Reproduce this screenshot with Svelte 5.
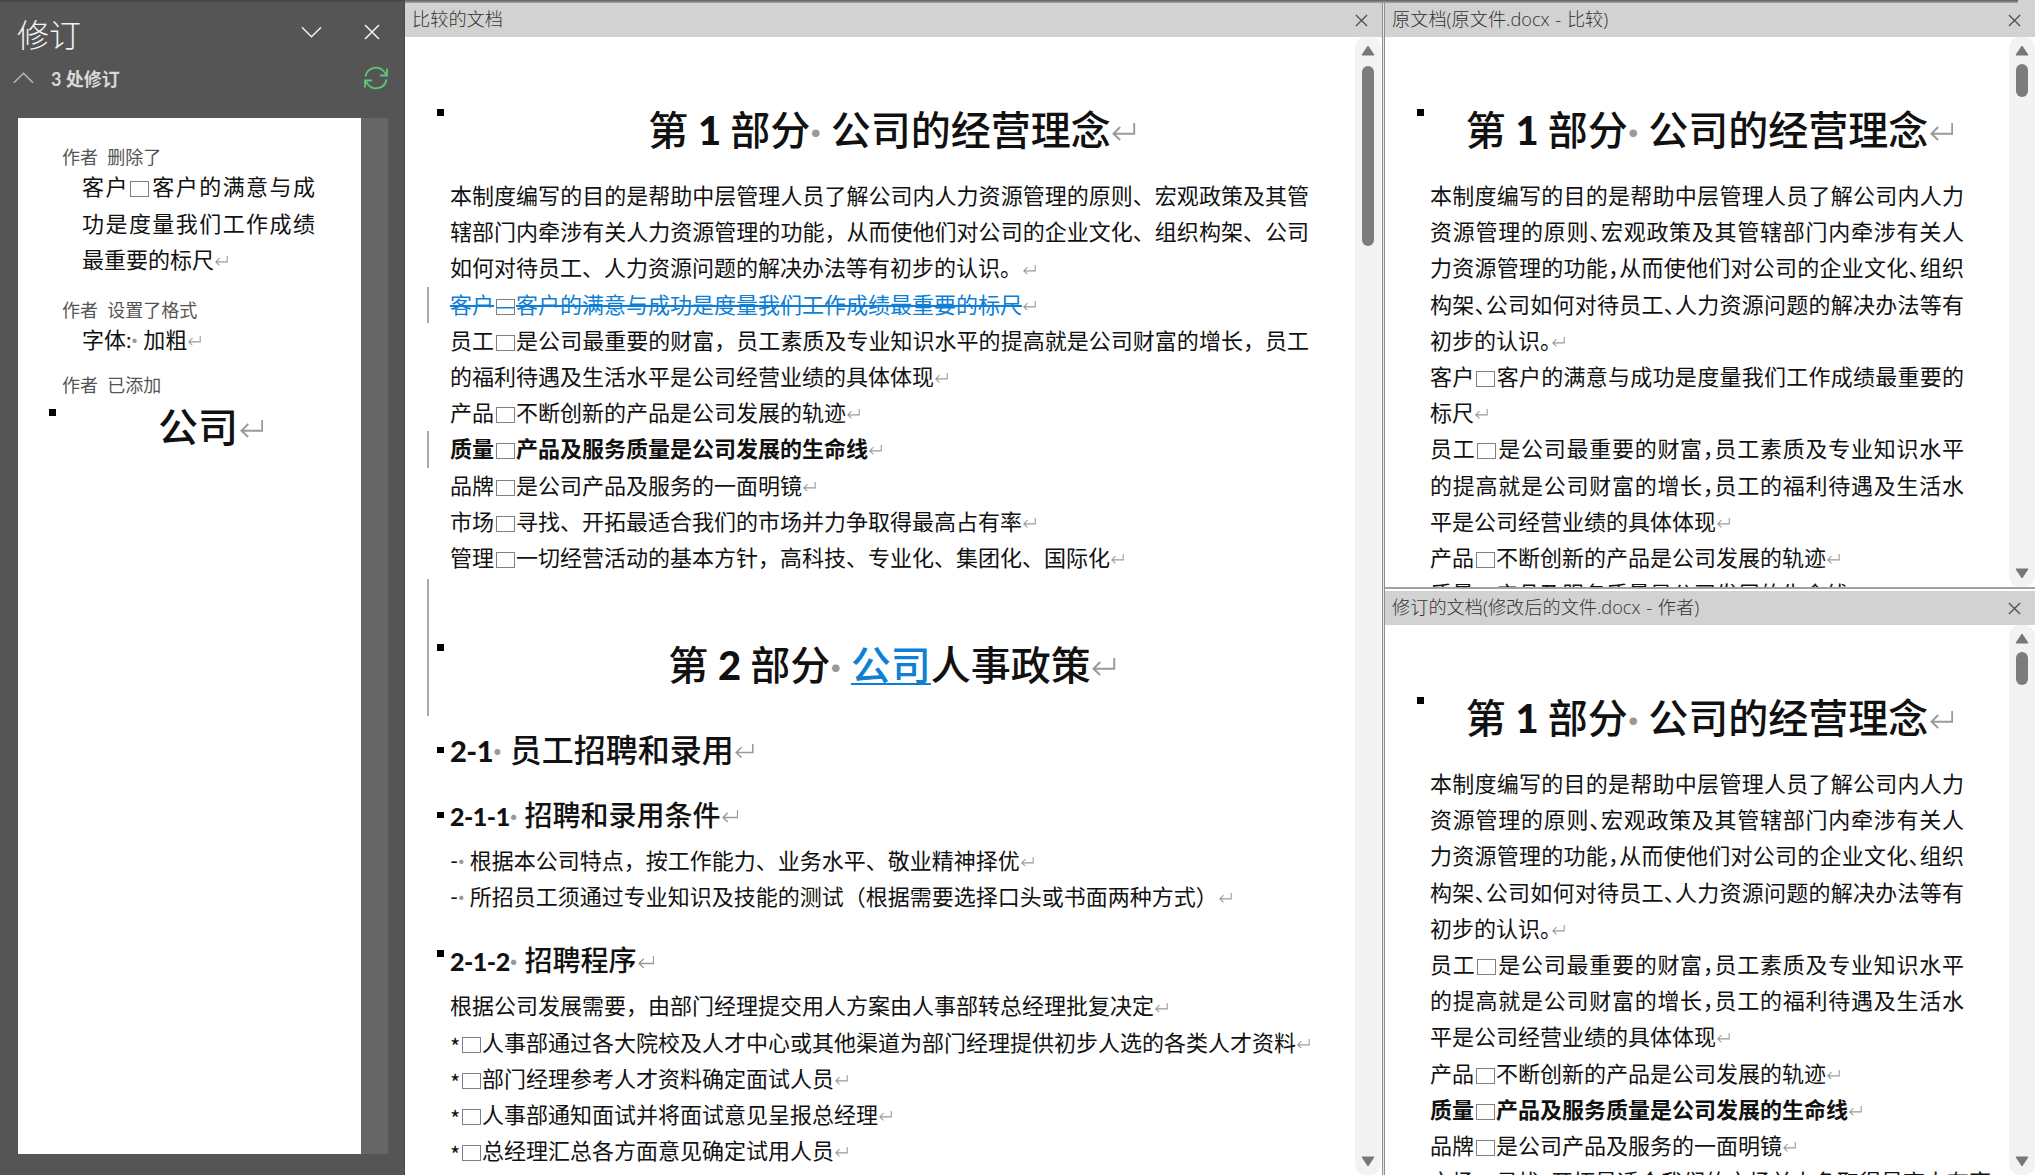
<script lang="ts">
	const comma = '\uFF0C';

	const intro = [
		'本制度编写的目的是帮助中层管理人员了解公司内人力',
		'资源管理的原则、宏观政策及其管辖部门内牵涉有关人',
		`力资源管理的功能${comma}从而使他们对公司的企业文化、组织`,
		'构架、公司如何对待员工、人力资源问题的解决办法等有',
		'初步的认识。↵'
	];
	const staff = [
		`员工□是公司最重要的财富${comma}员工素质及专业知识水平`,
		`的提高就是公司财富的增长${comma}员工的福利待遇及生活水`,
		'平是公司经营业绩的具体体现↵',
		'产品□不断创新的产品是公司发展的轨迹↵'
	];

	const original = [
		...intro,
		'客户□客户的满意与成功是度量我们工作成绩最重要的',
		'标尺↵',
		...staff,
		'质量□产品及服务质量是公司发展的生命线↵'
	];
	const revised = [
		...intro,
		...staff,
		'#质量□产品及服务质量是公司发展的生命线↵',
		'品牌□是公司产品及服务的一面明镜↵',
		'市场□寻找、开拓最适合我们的市场并力争取得最高占有率↵'
	];

	const compared = [
		'本制度编写的目的是帮助中层管理人员了解公司内人力资源管理的原则、宏观政策及其管',
		`辖部门内牵涉有关人力资源管理的功能${comma}从而使他们对公司的企业文化、组织构架、公司`,
		'如何对待员工、人力资源问题的解决办法等有初步的认识。↵',
		'~客户□客户的满意与成功是度量我们工作成绩最重要的标尺↵',
		`员工□是公司最重要的财富${comma}员工素质及专业知识水平的提高就是公司财富的增长${comma}员工`,
		'的福利待遇及生活水平是公司经营业绩的具体体现↵',
		'产品□不断创新的产品是公司发展的轨迹↵',
		'#质量□产品及服务质量是公司发展的生命线↵',
		'品牌□是公司产品及服务的一面明镜↵',
		'市场□寻找、开拓最适合我们的市场并力争取得最高占有率↵',
		`管理□一切经营活动的基本方针${comma}高科技、专业化、集团化、国际化↵`
	];
	const conditions = [
		`-· 根据本公司特点${comma}按工作能力、业务水平、敬业精神择优↵`,
		'-· 所招员工须通过专业知识及技能的测试\uFF08根据需要选择口头或书面两种方式\uFF09↵'
	];
	const hiring = [
		`根据公司发展需要${comma}由部门经理提交用人方案由人事部转总经理批复决定↵`,
		'*□人事部通过各大院校及人才中心或其他渠道为部门经理提供初步人选的各类人才资料↵',
		'*□部门经理参考人才资料确定面试人员↵',
		'*□人事部通知面试并将面试意见呈报总经理↵',
		'*□总经理汇总各方面意见确定试用人员↵'
	];
</script>

{#snippet rich(text)}
	{#each text.split(/(□|↵|·|\*)/) as part}
		{#if part === '□'}
			<span class="box"></span>
		{:else if part === '↵'}
			<svg class="mark" viewBox="0 0 24 18" aria-hidden="true"><path d="M23 0v11H1.500M8.500 4 1.500 11l7 6.500" /></svg>
		{:else if part === '·'}
			<span class="dot">·</span>
		{:else if part === '*'}
			<span class="star">*</span>
		{:else}
			{part}
		{/if}
	{/each}
{/snippet}

{#snippet lines(items)}
	{#each items as item}
		{@const marker = item[0] === '#' || item[0] === '~' ? item[0] : ''}
		<div
			class="line"
			class:full={!item.endsWith('↵')}
			class:strong={marker === '#'}
			class:deleted={marker === '~'}
			class:changed={marker !== ''}
		>
			{@render rich(item.slice(marker.length))}
		</div>
	{/each}
{/snippet}

{#snippet scrollbar(offset, size)}
	<div class="scrollbar">
		<svg class="arrow" viewBox="0 0 14 11" aria-hidden="true"><path d="M7 1 13 10H1Z" /></svg>
		<div class="thumb" style="margin-top: {offset}px; height: {size}px"></div>
		<svg class="arrow end" viewBox="0 0 14 11" aria-hidden="true"><path d="M1 1H13L7 10Z" /></svg>
	</div>
{/snippet}

{#snippet close()}
	<svg class="close" viewBox="0 0 14 14" aria-hidden="true"><path d="M1 1 13 13M13 1 1 13" /></svg>
{/snippet}

{#snippet partOne()}
	<h1 class="part"><i class="keep"></i>第 <b>1</b> 部分<span class="dot">·</span> 公司的经营理念{@render rich('↵')}</h1>
{/snippet}

<div class="shell">
	<div class="strip"></div>
	<div class="main">
		<aside class="sidebar">
			<div class="side-title">
				<span class="side-name">修订</span>
				<svg class="chevron" viewBox="0 0 22 12" aria-hidden="true"><path d="M1 1 11 11 21 1" /></svg>
				<svg class="side-close" viewBox="0 0 16 16" aria-hidden="true"><path d="M1 1 15 15M15 1 1 15" /></svg>
			</div>
			<div class="side-count">
				<svg class="chevron-up" viewBox="0 0 22 12" aria-hidden="true"><path d="M1 11 11 1 21 11" /></svg>
				<b>3 处修订</b>
				<svg class="refresh" viewBox="0 0 24 24" aria-hidden="true">
					<path d="M1.5 10.5A10.5 10.5 0 0 1 20 5.5L22.5 9" />
					<path d="M23 2.5V9.5H16" />
					<path d="M22.500 13.500A10.500 10.500 0 0 1 4 18.500L1.500 15" />
					<path d="M1 21.500V14.500H8" />
				</svg>
			</div>
			<div class="side-panel">
				<div class="side-list">
					<div class="who">作者&nbsp; 删除了</div>
					<div class="what full">客户{@render rich('□')}客户的满意与成</div>
					<div class="what full">功是度量我们工作成绩</div>
					<div class="what">最重要的标尺{@render rich('↵')}</div>

					<div class="who second">作者&nbsp; 设置了格式</div>
					<div class="what">字体:<span class="dot">·</span> 加粗{@render rich('↵')}</div>

					<div class="who third">作者&nbsp; 已添加</div>
					<div class="added"><i class="keep"></i>公司{@render rich('↵')}</div>
				</div>
				<div class="side-scroll"></div>
			</div>
		</aside>

		<section class="pane compare">
			<header class="pane-head"><span>比较的文档</span>{@render close()}</header>
			<div class="pane-body">
				<div class="doc">
					{@render partOne()}
					<div class="body-first">{@render lines(compared)}</div>
					<h1 class="part second changed"><i class="keep"></i>第 <b>2</b> 部分<span class="dot">·</span> <span class="inserted">公司</span>人事政策{@render rich('↵')}</h1>
					<h2><i class="keep"></i><b>2-1</b><span class="dot">·</span> 员工招聘和录用{@render rich('↵')}</h2>
					<h3><i class="keep"></i><b>2-1-1</b><span class="dot">·</span> 招聘和录用条件{@render rich('↵')}</h3>
					<div class="list">{@render lines(conditions)}</div>
					<h3 class="later"><i class="keep high"></i><b>2-1-2</b><span class="dot">·</span> 招聘程序{@render rich('↵')}</h3>
					<div class="list">{@render lines(hiring)}</div>
				</div>
				{@render scrollbar(10, 180)}
			</div>
		</section>

		<div class="divider"></div>

		<div class="side-by-side">
			<section class="pane narrow upper">
				<header class="pane-head"><span>原文档(原文件.docx - 比较)</span>{@render close()}</header>
				<div class="pane-body">
					<div class="doc">
						{@render partOne()}
						<div class="body-first">{@render lines(original)}</div>
					</div>
					{@render scrollbar(8, 33)}
				</div>
			</section>
			<section class="pane narrow lower">
				<header class="pane-head"><span>修订的文档(修改后的文件.docx - 作者)</span>{@render close()}</header>
				<div class="pane-body">
					<div class="doc">
						{@render partOne()}
						<div class="body-first">{@render lines(revised)}</div>
					</div>
					{@render scrollbar(8, 33)}
				</div>
			</section>
		</div>
	</div>
</div>

<style>
	:global(body) {
		margin: 0;
		background: #fff;
	}

	.shell {
		display: flex;
		flex-direction: column;
		width: 2035px;
		height: 1175px;
		overflow: hidden;
		font-family: Lato, 'Noto Sans CJK SC', sans-serif;
		color: #111;
		background: #fff;
	}

	.strip {
		flex: none;
		height: 3px;
		background:
			linear-gradient(#444, #555) 0 0 / 405px 100% no-repeat,
			linear-gradient(#5c5c5c, #a8a8a8) 0 0 / 2018px 100% no-repeat,
			#d2d2d2;
	}

	.main {
		flex: 1;
		display: flex;
		min-height: 0;
	}

	/* sidebar */
	.sidebar {
		flex: none;
		display: flex;
		flex-direction: column;
		width: 405px;
		padding-bottom: 21px;
		box-sizing: border-box;
		background: #555;
		border-right: 1px solid #4b4b4b;
	}

	.side-title {
		flex: none;
		display: flex;
		align-items: center;
		height: 63px;
		margin-bottom: 2px;
		padding: 0 24px 0 17px;
	}

	.side-name {
		flex: 1;
		font-size: 32px;
		font-weight: 300;
		line-height: 63px;
		color: #f2f2f2;
	}

	.chevron {
		width: 21px;
		height: 12px;
		margin: 0 42px 6px 0;
		fill: none;
		stroke: #f0f0f0;
		stroke-width: 1.6;
	}

	.side-close {
		width: 16px;
		height: 16px;
		margin-bottom: 6px;
		fill: none;
		stroke: #f0f0f0;
		stroke-width: 1.6;
	}

	.side-count {
		flex: none;
		display: flex;
		align-items: center;
		height: 20px;
		padding: 0 16px 0 13px;
		font-size: 18px;
		color: #d8d8d8;
	}

	.side-count b {
		flex: 1;
		margin-left: 17px;
		font-weight: 700;
	}

	.chevron-up {
		width: 21px;
		height: 12px;
		fill: none;
		stroke: #b8b8b8;
		stroke-width: 1.6;
	}

	.refresh {
		width: 24px;
		height: 24px;
		fill: none;
		stroke: #5cc878;
		stroke-width: 1.8;
	}

	.side-panel {
		flex: 1;
		display: flex;
		margin: 30px 16px 0 18px;
		min-height: 0;
	}

	.side-list {
		flex: 1;
		padding: 27px 2px 0 44px;
		background: #fff;
	}

	.side-scroll {
		flex: none;
		width: 27px;
		background: #666;
	}

	.who {
		height: 24px;
		font-size: 18px;
		font-weight: 400;
		line-height: 24px;
		color: #555;
	}

	.who.second {
		margin-top: 19px;
	}

	.who.third {
		margin-top: 15px;
	}

	.what {
		width: 233px;
		height: 36.5px;
		margin-left: 20px;
		font-size: 22px;
		font-weight: 400;
		line-height: 36.5px;
		white-space: nowrap;
	}

	.what.full {
		text-align: justify;
		text-align-last: justify;
	}

	.added {
		position: relative;
		height: 60px;
		font-size: 40px;
		font-weight: 500;
		line-height: 60px;
		text-align: center;
	}

	/* comparison panes */
	.pane {
		display: flex;
		flex-direction: column;
		min-width: 0;
		min-height: 0;
	}

	.compare {
		flex: none;
		width: 977px;
	}

	.pane-head {
		flex: none;
		display: flex;
		align-items: center;
		justify-content: space-between;
		height: 34px;
		padding: 0 14px 0 7px;
		font-family: 'Open Sans', 'Noto Sans CJK SC', sans-serif;
		font-size: 18.2px;
		font-weight: 300;
		word-spacing: 1px;
		color: #333;
		background: #d2d2d2;
	}

	.pane-head span {
		position: relative;
		top: -2px;
	}

	.close {
		width: 13px;
		height: 13px;
		fill: none;
		stroke: #555;
		stroke-width: 1.5;
	}

	.pane-body {
		flex: 1;
		display: flex;
		min-height: 0;
	}

	.doc {
		flex: 1;
		min-width: 0;
		padding: 63px 0 0 45px;
		overflow: hidden;
	}

	.compare .doc > * {
		width: 859px;
	}

	.narrow .doc > * {
		width: 534px;
		font-feature-settings: 'halt';
	}

	.line {
		position: relative;
		height: 36.2px;
		font-size: 22px;
		font-weight: 400;
		line-height: 36.2px;
		white-space: nowrap;
	}

	.line.full {
		text-align: justify;
		text-align-last: justify;
	}

	.line.strong {
		font-weight: 700;
	}

	.line.deleted {
		color: #0f7fd6;
		text-decoration: line-through;
		text-decoration-thickness: 1.5px;
	}

	.line.deleted .box {
		background: linear-gradient(#0f7fd6, #0f7fd6) center 56% / 100% 1.5px no-repeat;
	}

	.line.changed::before {
		content: '';
		position: absolute;
		top: 0;
		bottom: 0;
		left: -23px;
		width: 2px;
		background: #aaa;
	}

	.narrow .line.changed::before {
		display: none;
	}

	.box {
		display: inline-block;
		box-sizing: border-box;
		width: 19px;
		height: 16px;
		margin: 0 1.5px;
		border: 1px solid #808080;
		vertical-align: -2px;
	}

	.star {
		display: inline-block;
		width: 10px;
		font-family: 'Noto Sans CJK SC', sans-serif;
		vertical-align: -4px;
	}

	.mark {
		width: 0.58em;
		height: 0.44em;
		margin-left: 0.04em;
		vertical-align: 0.1em;
		fill: none;
		stroke: #9a9a9a;
		stroke-width: 2;
	}

	.dot {
		color: #999;
		font-weight: 700;
	}

	.keep {
		position: absolute;
		left: -13px;
		top: 12px;
		width: 6.500px;
		height: 6.500px;
		background: #000;
	}

	.part {
		position: relative;
		box-sizing: border-box;
		height: 60px;
		margin: 0;
		padding-left: 25px;
		font-size: 40px;
		font-weight: 500;
		line-height: 60px;
		word-spacing: -0.5px;
		text-align: center;
		white-space: nowrap;
	}

	.part .keep {
		top: 9px;
	}

	.body-first {
		margin-top: 18px;
	}

	.part.second {
		height: 137px;
		margin-top: 3px;
		padding-top: 56px;
	}

	.part.second .keep {
		top: 65px;
	}

	.part.changed::before {
		content: '';
		position: absolute;
		top: 0;
		bottom: 0;
		left: -23px;
		width: 2px;
		background: #aaa;
	}

	.inserted {
		color: #0f7fd6;
		text-decoration: underline;
		text-decoration-thickness: 2px;
		text-underline-offset: 3px;
	}

	h1 b,
	h2 b,
	h3 b {
		font-weight: 900;
		letter-spacing: -0.5px;
	}

	h2,
	h3 {
		position: relative;
		margin: 0;
		font-weight: 500;
		white-space: nowrap;
	}

	h2 {
		height: 44px;
		margin-top: 11.500px;
		font-size: 32px;
		line-height: 44px;
	}

	h2 b {
		font-size: 29px;
	}

	h2 .keep {
		top: 19px;
	}

	h3 {
		height: 40px;
		margin-top: 23px;
		font-size: 28px;
		line-height: 40px;
	}

	h3 b {
		font-size: 25px;
	}

	h3 .keep {
		top: 17px;
	}

	h3.later {
		margin-top: 25.500px;
	}

	h3 .keep.high {
		top: 10px;
	}

	.list {
		margin-top: 8px;
	}

	/* scrollbars and splits */
	.scrollbar {
		flex: none;
		display: flex;
		flex-direction: column;
		align-items: center;
		width: 26px;
		padding: 8px 0;
		box-sizing: border-box;
		border-radius: 11px;
		background: #f3f3f3;
	}

	.compare .scrollbar {
		margin-right: 1px;
	}

	.arrow {
		flex: none;
		width: 14px;
		height: 11px;
		fill: #777;
		stroke: #777;
		stroke-width: 1;
		stroke-linejoin: round;
	}

	.arrow.end {
		margin-top: auto;
	}

	.thumb {
		flex: none;
		width: 12px;
		border-radius: 6px;
		background: #7c7c7c;
	}

	.divider {
		flex: none;
		width: 3px;
		background: linear-gradient(90deg, #8f8f8f 33%, #e8e8e8 33% 66%, #8f8f8f 66%);
	}

	.side-by-side {
		flex: 1;
		display: flex;
		flex-direction: column;
		min-width: 0;
	}

	.upper {
		flex: none;
		height: 584px;
		border-bottom: 2px solid #a2a2a2;
	}

	.lower {
		flex: 1;
		margin-top: 2px;
	}
</style>
